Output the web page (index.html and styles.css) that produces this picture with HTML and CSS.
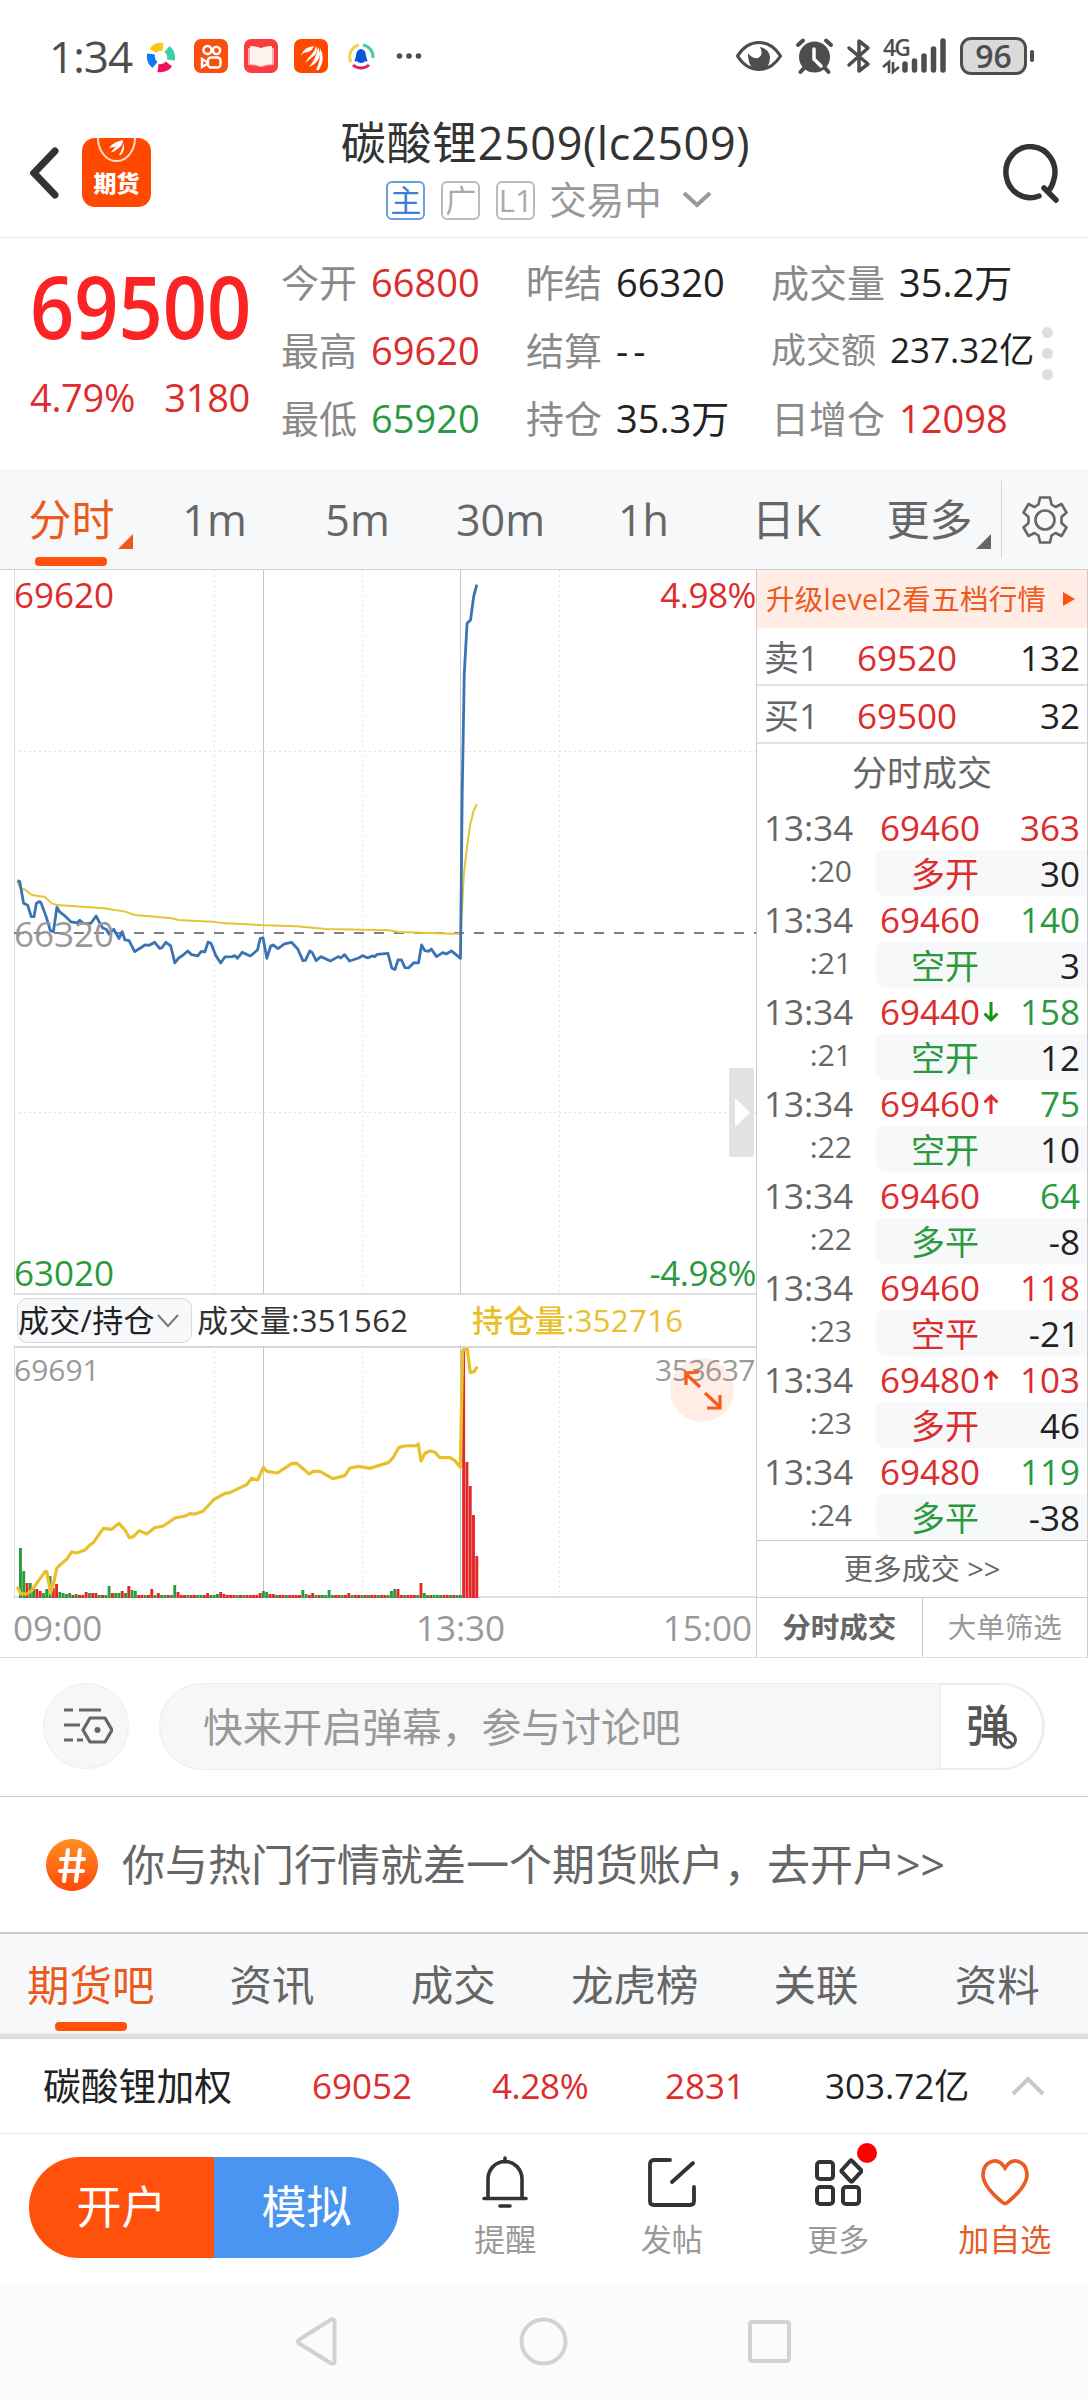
FILE: index.html
```html
<!DOCTYPE html>
<html lang="zh-CN">
  <head>
    <meta charset="UTF-8" />
    <meta name="viewport" content="width=device-width, initial-scale=1.0" />
    <title>碳酸锂2509(lc2509)</title>
    <link rel="stylesheet" href="styles.css">
  </head>
  <body>
    <div class="page">
      <!-- 状态栏 -->
      <div class="status-bar">
        <span class="clock">1:34</span>
        <svg class="status-apps" width="284" height="40" viewBox="144 36 284 40">
          <g fill="none" stroke-width="8">
            <path d="M153 51Q156 46 163 47" stroke="#f8c91c" />
            <path d="M167 49Q172 53 171 60" stroke="#3bd0a5" />
            <path d="M169 64Q165 69 158 68" stroke="#f0115c" />
            <path d="M155 65Q150 61 151 54" stroke="#0a7cf5" />
          </g>
          <rect x="194" y="39" width="34" height="34" rx="7" fill="#fb4f10" />
          <g fill="none" stroke="#fff" stroke-width="2.4">
            <circle cx="207.500" cy="50" r="4" />
            <circle cx="216.500" cy="50.500" r="3.600" />
            <rect x="208" y="57.500" width="12.500" height="10" rx="3" />
            <path d="M207 62l-5-3v8l5-3" />
          </g>
          <rect x="244" y="39" width="34" height="34" rx="7" fill="#fb3d43" />
          <path d="M248 48h26v17q-6 0-13 2q-7-2-13-2z" fill="#fbaead" />
          <path d="M250 46q6 0 11 2q5-2 11-2v18q-6 0-11 2q-5-2-11-2z" fill="#fff3f0" />
          <rect x="294" y="39" width="34" height="34" rx="7" fill="#ff4800" />
          <g fill="#fff">
            <path d="M301 55q3-8 13-9q-2 5-6 6q-4 0-7 3z" />
            <path d="M305 63q3-5 6-8q4-4 5-9q2 6-1 9q-5 4-10 8z" />
            <path d="M309 67q7-8 9-20q4 7 0 13q-3 5-9 7z" />
            <path d="M316 70q5-10 4-22q6 10-1 22z" />
          </g>
          <g fill="none" stroke-width="3">
            <path d="M351 62A12 12 0 0 1 359 45" stroke="#f3cf54" />
            <path d="M363 45A12 12 0 0 1 373 58" stroke="#49caa6" />
            <path d="M353 65A12 12 0 0 0 369 65" stroke="#d9206a" />
          </g>
          <path d="M361 49q-5 1-5 7l-1.500 5q1 1 2 0q2 2 4.500 2t4.500-2q1 1 2 0l-1.500-5q0-6-5-7z" fill="#0a55d8" />
          <g fill="#4d4d4d">
            <circle cx="399.500" cy="56" r="2.800" />
            <circle cx="409" cy="56" r="2.800" />
            <circle cx="418.500" cy="56" r="2.800" />
          </g>
        </svg>
        <svg class="status-signal" width="222" height="60" viewBox="732 26 222 60">
          <g fill="none" stroke="#4d4d4d" stroke-linecap="round" stroke-linejoin="round">
            <path d="M736.500 56Q745 42.500 758 42.500T779.500 56Q771 69.500 758 69.500T736.500 56z" stroke-width="3.200" />
            <path d="M797 45l5-4.500M830 45l-5-4.500M803 68l-3.500 4M824 68l3.500 4" stroke-width="4" />
            <path d="M848 48l19 16-9 7V41l9 7-19 17" stroke-width="3.500" />
            <path d="M904 70V64M913.500 70V61M923 70V56M932.500 70V49M942 70V41" stroke-width="5.500" />
          </g>
          <path d="M747 53q0 17 11 17t11-13q-1-8-10-10q4 8-2 11q-6 1-10-5z" fill="#4d4d4d" />
          <circle cx="813.500" cy="57" r="15.500" fill="#4d4d4d" />
          <path d="M813 49v10l7 7" fill="none" stroke="#fff" stroke-width="3.500" stroke-linecap="round" />
          <path d="M882 67l6-5v11M898 67l-6 5V62" fill="none" stroke="#4d4d4d" stroke-width="2.600" />
          <text x="882" y="56" class="net-type">4G</text>
        </svg>
        <div class="battery">96</div>
      </div>

      <!-- 标题栏 -->
      <div class="header">
        <div class="header-left">
          <svg width="30" height="52" viewBox="0 0 30 52">
            <path d="M25 4L4 26l21 22" fill="none" stroke="#333" stroke-width="7" stroke-linecap="round" />
          </svg>
          <div class="app-logo">
            <svg width="69" height="26" viewBox="0 0 69 26">
              <path d="M16 0a18.500 23 0 0 0 37 0" fill="none" stroke="#ffd9ca" stroke-width="2" />
              <path d="M27 10q4-6 14-8q0 6-7 10q-4 3-5 2q2-3 5-5q-4 0-7 1zM37 17q4-6 4-12q3 6-2 12z" fill="#fff" />
            </svg>
            <span>期货</span>
          </div>
        </div>
        <div class="header-title">
          <h1>碳酸锂2509(lc2509)</h1>
          <div class="header-sub">
            <span class="badge badge-main">主</span>
            <span class="badge">广</span>
            <span class="badge">L1</span>
            <span class="trade-state">交易中</span>
            <svg width="30" height="18" viewBox="0 0 30 18">
              <path d="M2 2l13 12L28 2" fill="none" stroke="#999" stroke-width="4" />
            </svg>
          </div>
        </div>
        <svg class="search-icon" width="58" height="60" viewBox="0 0 58 60">
          <path d="M36 52A24.500 25.500 0 1 1 51 35Q49 43 46 46M41 44L53 56" fill="none" stroke="#333" stroke-width="5.500" stroke-linecap="round" />
        </svg>
      </div>

      <!-- 行情概览 -->
      <div class="quote">
        <div class="quote-price">
          <div class="last-price">69500</div>
          <div class="change"><span>4.79%</span><span>3180</span></div>
        </div>
        <div class="quote-col col-1">
          <div class="cell"><label>今开</label><b class="red">66800</b></div>
          <div class="cell"><label>最高</label><b class="red">69620</b></div>
          <div class="cell"><label>最低</label><b class="green">65920</b></div>
        </div>
        <div class="quote-col col-2">
          <div class="cell"><label>昨结</label><b>66320</b></div>
          <div class="cell"><label>结算</label><b class="empty">--</b></div>
          <div class="cell"><label>持仓</label><b>35.3万</b></div>
        </div>
        <div class="quote-col col-3">
          <div class="cell"><label>成交量</label><b>35.2万</b></div>
          <div class="cell cell-small"><label>成交额</label><b>237.32亿</b></div>
          <div class="cell"><label>日增仓</label><b class="red">12098</b></div>
        </div>
        <div class="more-dots"><i></i><i></i><i></i></div>
      </div>

      <!-- 周期切换 -->
      <div class="period-tabs">
        <div class="period active">分时<i class="corner"></i></div>
        <div class="period">1m</div>
        <div class="period">5m</div>
        <div class="period">30m</div>
        <div class="period">1h</div>
        <div class="period">日K</div>
        <div class="period">更多<i class="corner"></i></div>
        <div class="setting">
          <svg width="46" height="50" viewBox="-23 -25 46 50">
            <path d="M-5-22.500h10l1.500 7 4 2.500 6-3 5 8.500-5 4.500v6l5 4.500-5 8.500-6-3-4 2.500-1.500 7h-10l-1.500-7-4-2.500-6 3-5-8.500 5-4.500v-6l-5-4.500 5-8.500 6 3 4-2.500z" fill="none" stroke="#666" stroke-width="2.600" stroke-linejoin="round" />
            <circle r="9.500" fill="none" stroke="#666" stroke-width="2.600" />
          </svg>
        </div>
      </div>

      <div class="main">
        <!-- 分时图 -->
        <div class="chart">
          <svg class="price-chart" width="756" height="725" viewBox="0 0 756 725">
            <g fill="none" stroke="#e3e3e3" stroke-dasharray="2 3">
              <path d="M214.500 0V724M362.500 0V724M559.500 0V724" />
              <path d="M14 181.500H756M14 542.500H756" />
            </g>
            <path d="M263.500 0V724M460.500 0V724" stroke="#c4c4c4" />
            <path d="M14.500 0V724" stroke="#ddd" />
            <path d="M14 724H756" stroke="#dedede" stroke-width="2" />
            <path d="M14 363H756" stroke="#808080" stroke-width="1.800" stroke-dasharray="10 10" />
            <g transform="translate(0 -10) scale(.347 .3333)" class="lines">
              <polyline class="line-avg" points="50,964 60,987 72,989 92,1005 130,1011 150,1031 165,1035 300,1045 360,1055 388,1065 490,1074 515,1080 610,1085 640,1089 760,1096 855,1099 940,1107 1120,1111 1150,1116 1327,1122 1331,1060 1337,940 1346,860 1355,795 1364,755 1374,732" />
              <polyline class="line-price" points="50,962 57,965 68,1030 80,1036 90,1070 98,1070 105,1030 112,1025 118,1028 133,1070 145,1112 154,1115 164,1042 172,1056 185,1066 205,1086 222,1089 230,1081 240,1090 262,1090 277,1068 288,1090 296,1104 306,1108 314,1122 328,1108 343,1136 352,1115 360,1140 372,1142 388,1175 400,1167 418,1155 430,1156 446,1147 460,1165 466,1164 478,1147 492,1158 504,1209 515,1194 527,1186 541,1173 552,1184 570,1188 580,1174 590,1176 600,1146 608,1150 622,1187 636,1209 648,1191 670,1190 677,1187 684,1195 698,1177 712,1184 722,1188 742,1170 750,1135 758,1134 769,1195 780,1158 787,1155 801,1166 820,1152 840,1147 858,1167 873,1202 880,1201 893,1173 900,1178 911,1202 925,1190 952,1203 975,1190 982,1194 993,1184 1007,1203 1034,1194 1045,1187 1060,1194 1072,1188 1080,1190 1087,1183 1118,1180 1129,1224 1138,1229 1147,1200 1157,1200 1167,1223 1177,1224 1193,1208 1206,1209 1215,1155 1224,1172 1236,1174 1243,1167 1258,1190 1276,1178 1286,1182 1301,1173 1327,1195 1332,700 1338,340 1346,190 1356,180 1365,110 1374,74" />
            </g>
            <text x="14" y="38" class="axis red">69620</text>
            <text x="756" y="38" class="axis end red">4.98%</text>
            <text x="14" y="377" class="axis">66320</text>
            <text x="14" y="716" class="axis green">63020</text>
            <text x="756" y="716" class="axis end green">-4.98%</text>
            <rect x="729" y="498" width="25" height="89" rx="2" fill="#e2e2e2" />
            <path d="M735 528l15 14.500-15 14.500z" fill="#fff" />
          </svg>

          <div class="indicator-bar">
            <div class="indicator-select">
              成交/持仓
              <svg width="22" height="14" viewBox="0 0 22 14"><path d="M1 1l10 11L21 1" fill="none" stroke="#777" stroke-width="2" /></svg>
            </div>
            <span class="volume-text">成交量:351562</span>
            <span class="position-text">持仓量:352716</span>
          </div>

          <svg class="volume-chart" width="756" height="252" viewBox="0 0 756 252">
            <path d="M14 1H756" stroke="#d8d8d8" stroke-width="2" />
            <path d="M214.500 0V250M362.500 0V250M559.500 0V250" stroke="#e3e3e3" stroke-dasharray="2 3" />
            <path d="M263.500 0V250M460.500 0V250" stroke="#c4c4c4" />
            <path d="M14.500 0V250" stroke="#ddd" />
            <path d="M14 251H756" stroke="#dedede" stroke-width="2" />
            <g id="volume-bars"></g>
            <g transform="translate(0 -76) scale(.3333)" class="lines">
              <polyline class="line-position" points="52,950 62,972 80,972 95,962 135,905 140,905 152,970 163,930 170,895 180,885 200,868 215,846 230,849 255,840 268,826 280,818 310,775 335,778 357,760 375,780 388,803 400,800 418,782 440,792 465,773 490,768 525,744 555,738 570,731 585,732 610,723 640,690 675,670 690,668 740,644 755,625 773,630 790,592 800,604 832,609 875,581 890,580 928,612 940,604 960,604 998,626 1035,617 1050,594 1075,589 1110,595 1165,578 1180,562 1197,532 1215,528 1250,527 1255,522 1263,573 1275,550 1290,543 1305,547 1318,562 1350,563 1365,572 1381,592 1388,245 1391,238 1402,238 1411,308 1422,305 1432,290" />
            </g>
            <circle cx="702" cy="44" r="32" fill="#ffede6" />
            <text x="14" y="35" class="axis small">69691</text>
            <text x="755" y="35" class="axis small end">353637</text>
            <path d="M700 41l-15-14M686 39V27l13-1M705 47l15 14M707 62h13V49" fill="none" stroke="#fa5a1a" stroke-width="3.200" />
          </svg>

          <div class="time-axis">
            <span>09:00</span>
            <span class="time-mid">13:30</span>
            <span>15:00</span>
          </div>
        </div>

        <!-- 盘口与成交明细 -->
        <div class="panel">
          <div class="level2">升级level2看五档行情<i></i></div>
          <div class="order"><span>卖1</span><b>69520</b><em>132</em></div>
          <div class="order"><span>买1</span><b>69500</b><em>32</em></div>
          <div class="deal-title">分时成交</div>

          <div class="deal">
            <div class="deal-time">13:34<small>:20</small></div>
            <div class="deal-info">
              <div class="deal-row"><b>69460</b><em class="red">363</em></div>
              <div class="deal-row deal-type"><span class="red">多开</span><em>30</em></div>
            </div>
          </div>
          <div class="deal">
            <div class="deal-time">13:34<small>:21</small></div>
            <div class="deal-info">
              <div class="deal-row"><b>69460</b><em class="green">140</em></div>
              <div class="deal-row deal-type"><span class="green">空开</span><em>3</em></div>
            </div>
          </div>
          <div class="deal">
            <div class="deal-time">13:34<small>:21</small></div>
            <div class="deal-info">
              <div class="deal-row"><b>69440</b><svg class="arrow" viewBox="0 0 16 22"><path d="M8 1v18M1.500 12.500L8 19l6.500-6.500" stroke="#109618" /></svg><em class="green">158</em></div>
              <div class="deal-row deal-type"><span class="green">空开</span><em>12</em></div>
            </div>
          </div>
          <div class="deal">
            <div class="deal-time">13:34<small>:22</small></div>
            <div class="deal-info">
              <div class="deal-row"><b>69460</b><svg class="arrow" viewBox="0 0 16 22"><path d="M8 21V3M1.500 9.500L8 3l6.500 6.500" stroke="#e02b2b" /></svg><em class="green">75</em></div>
              <div class="deal-row deal-type"><span class="green">空开</span><em>10</em></div>
            </div>
          </div>
          <div class="deal">
            <div class="deal-time">13:34<small>:22</small></div>
            <div class="deal-info">
              <div class="deal-row"><b>69460</b><em class="green">64</em></div>
              <div class="deal-row deal-type"><span class="green">多平</span><em>-8</em></div>
            </div>
          </div>
          <div class="deal">
            <div class="deal-time">13:34<small>:23</small></div>
            <div class="deal-info">
              <div class="deal-row"><b>69460</b><em class="red">118</em></div>
              <div class="deal-row deal-type"><span class="red">空平</span><em>-21</em></div>
            </div>
          </div>
          <div class="deal">
            <div class="deal-time">13:34<small>:23</small></div>
            <div class="deal-info">
              <div class="deal-row"><b>69480</b><svg class="arrow" viewBox="0 0 16 22"><path d="M8 21V3M1.500 9.500L8 3l6.500 6.500" stroke="#e02b2b" /></svg><em class="red">103</em></div>
              <div class="deal-row deal-type"><span class="red">多开</span><em>46</em></div>
            </div>
          </div>
          <div class="deal">
            <div class="deal-time">13:34<small>:24</small></div>
            <div class="deal-info">
              <div class="deal-row"><b>69480</b><em class="green">119</em></div>
              <div class="deal-row deal-type"><span class="green">多平</span><em>-38</em></div>
            </div>
          </div>

          <div class="deal-more">更多成交 &gt;&gt;</div>
          <div class="panel-tabs">
            <span class="active">分时成交</span>
            <span>大单筛选</span>
          </div>
        </div>
      </div>

      <!-- 弹幕 -->
      <div class="barrage">
        <div class="barrage-setting">
          <svg width="50" height="38" viewBox="0 0 50 38">
            <g fill="none" stroke="#666" stroke-width="3.200" stroke-linejoin="round">
              <path d="M1 3h9M16 3h22M1 18h16M1 33h9M14 33h6" />
              <path d="M27 11h15l7 12-7 12H27l-7-12z" />
            </g>
            <circle cx="34.500" cy="23" r="3" fill="#666" />
          </svg>
        </div>
        <div class="barrage-input">
          <span>快来开启弹幕，参与讨论吧</span>
          <div class="barrage-switch">
            弹
            <svg class="ban" width="20" height="20" viewBox="0 0 20 20">
              <circle cx="10" cy="10" r="7.500" fill="#fff" stroke="#555" stroke-width="3" />
              <path d="M5 5l10 10" stroke="#555" stroke-width="3" />
            </svg>
          </div>
        </div>
      </div>

      <!-- 开户推广 -->
      <div class="promo">
        <svg width="52" height="52" viewBox="0 0 52 52">
          <defs>
            <linearGradient id="hot" x1="0" y1="0" x2="0" y2="1">
              <stop offset="0" stop-color="#ff8f1f" />
              <stop offset="1" stop-color="#ff4a0d" />
            </linearGradient>
          </defs>
          <circle cx="26" cy="26" r="26" fill="url(#hot)" />
          <path d="M22 11l-4 31M34 11l-4 31M15 20h23M14 32h23" stroke="#fff" stroke-width="4.200" stroke-linecap="round" />
        </svg>
        <span>你与热门行情就差一个期货账户，去开户&gt;&gt;</span>
      </div>

      <div class="section-tabs">
        <div class="section active">期货吧</div>
        <div class="section">资讯</div>
        <div class="section">成交</div>
        <div class="section">龙虎榜</div>
        <div class="section">关联</div>
        <div class="section">资料</div>
      </div>

      <!-- 加权指数 -->
      <div class="index-bar">
        <span class="index-name">碳酸锂加权</span>
        <span class="index-price red">69052</span>
        <span class="index-rate red">4.28%</span>
        <span class="index-diff red">2831</span>
        <span class="index-amount">303.72亿</span>
        <svg width="34" height="22" viewBox="0 0 34 22"><path d="M2 19L17 4l15 15" fill="none" stroke="#c8c8c8" stroke-width="4" /></svg>
      </div>

      <!-- 底部操作 -->
      <div class="action-bar">
        <div class="trade-buttons">
          <div class="btn-open">开户</div>
          <div class="btn-demo">模拟</div>
        </div>
        <div class="action">
          <svg width="50" height="54" viewBox="0 0 50 54">
            <g fill="none" stroke="#333" stroke-width="3.600" stroke-linecap="round">
              <path d="M25 3v4M8 43V24a17 17.500 0 0 1 34 0V43M4 43.500H46M20 51h10" />
            </g>
          </svg>
          <span>提醒</span>
        </div>
        <div class="action">
          <svg width="50" height="54" viewBox="0 0 50 54">
            <path d="M23 5H7Q3 5 3 9V46Q3 50 7 50H43Q47 50 47 46V32M25 27L46 8" fill="none" stroke="#333" stroke-width="3.800" stroke-linecap="round" />
          </svg>
          <span>发帖</span>
        </div>
        <div class="action">
          <svg width="50" height="54" viewBox="0 0 50 54">
            <g fill="none" stroke="#333" stroke-width="4">
              <rect x="4" y="7" width="16" height="17" rx="3" />
              <rect x="4" y="32" width="16" height="17" rx="3" />
              <rect x="30" y="32" width="16" height="17" rx="3" />
              <path d="M38.500 5.500L48 15q1 1 0 2l-8.500 9q-1 1-2 0L29 17q-1-1 0-2l8.500-9.500q.5-.5 1 0z" />
            </g>
          </svg>
          <span>更多</span>
          <i class="red-dot"></i>
        </div>
        <div class="action action-fav">
          <svg width="50" height="54" viewBox="0 0 50 54">
            <path d="M25 13Q20 5 13.500 6Q3 8 3 21Q4 32 22 47Q25 50 28 47Q46 32 47 21Q47 8 36.500 6Q30 5 25 13z" fill="none" stroke="#ea5d22" stroke-width="3.600" />
          </svg>
          <span>加自选</span>
        </div>
      </div>

      <!-- 系统导航 -->
      <div class="system-nav">
        <svg width="496" height="50" viewBox="295 2316 496 50">
          <g fill="none" stroke="#d2d2d2" stroke-width="4" stroke-linejoin="round">
            <path d="M298.500 2340q-1 1.500 0 3l32 20q4 2 4-2v-39q0-4-4-2z" />
            <circle cx="543.500" cy="2341.500" r="22" />
            <rect x="750" y="2322" width="39" height="39" rx="2" />
          </g>
        </svg>
      </div>
    </div>
    <script src="script.js"></script>
  </body>
</html>
```
FILE: styles.css
```css
:root {
  --red: #dc2c2c;
  --green: #2a9a3e;
  --orange: #ff500c;
  --blue: #4b95f2;
  --yellow: #e9c02c;
  --text: #222;
  --gray: #666;
  --light-gray: #999;
  --bar-bg: #f7f8fa;
}

* {
  margin: 0;
  padding: 0;
  box-sizing: border-box;
}

body {
  font-family: "Open Sans", "Noto Sans CJK SC", sans-serif;
  color: var(--text);
  background: #fff;
}

b,
em,
i {
  font-weight: 400;
  font-style: normal;
}

svg {
  display: block;
  flex-shrink: 0;
}

.red {
  color: var(--red);
  fill: var(--red);
}

.green {
  color: var(--green);
  fill: var(--green);
}

.page {
  width: 1088px;
  height: 2400px;
  overflow: hidden;
  white-space: nowrap;
}

/* 状态栏 */
.status-bar {
  height: 112px;
  padding: 0 54px 0 49px;
  display: flex;
  align-items: center;
  color: #4d4d4d;
}

.clock {
  width: 95px;
  font-size: 44px;
  font-weight: 500;
  letter-spacing: -1px;
}

.status-signal {
  margin-left: auto;
}

.net-type {
  font-size: 23px;
  font-weight: 600;
  letter-spacing: -2px;
  fill: #4d4d4d;
}

.battery {
  position: relative;
  width: 67px;
  height: 38px;
  margin: 0 7px 0 5px;
  border: 3px solid #4d4d4d;
  border-radius: 11px;
  background: #dadada;
  font-size: 32px;
  font-weight: 600;
  line-height: 32px;
  text-align: center;
}

.battery::after {
  content: "";
  position: absolute;
  top: 10px;
  right: -10px;
  width: 4px;
  height: 12px;
  border-radius: 2px;
  background: #4d4d4d;
}

/* 标题栏 */
.header {
  height: 126px;
  padding: 0 27px 0 30px;
  display: flex;
  justify-content: space-between;
  border-bottom: 1px solid #e8e8e8;
}

.header-left {
  width: 300px;
  height: 121px;
  display: flex;
  align-items: center;
  gap: 22px;
}

.app-logo {
  width: 69px;
  height: 69px;
  border-radius: 13px;
  background: #ff4800;
  color: #fff;
  font-size: 23px;
  font-weight: 900;
  line-height: 38px;
  text-align: center;
}

.header-title {
  display: flex;
  flex-direction: column;
  align-items: center;
}

.header-title h1 {
  height: 64px;
  font-size: 45px;
  font-weight: 400;
  line-height: 62px;
  letter-spacing: 0.6px;
  color: #333;
}

.header-sub {
  display: flex;
  align-items: center;
  padding-left: 7px;
  color: var(--light-gray);
  height: 48px;
}

.badge {
  width: 39px;
  height: 39px;
  margin-right: 16px;
  border: 2px solid #bbb;
  border-radius: 6px;
  font-size: 31px;
  line-height: 34px;
  text-align: center;
  color: #aaa;
}

.badge-main {
  border-color: #6b9fe0;
  color: #3f7fd6;
}

.trade-state {
  margin: 0 20px 0 -2px;
  font-size: 37.500px;
  line-height: 46px;
}

.search-icon {
  margin: 32px 0 0 242px;
}

/* 行情概览 */
.quote {
  height: 231px;
  display: flex;
}

.quote-price {
  width: 281px;
  padding: 24px 0 0 30px;
  color: var(--red);
}

.last-price {
  height: 86px;
  font-size: 87px;
  font-weight: 600;
  line-height: 86px;
  color: #fb2323;
  transform: scaleX(0.89);
  transform-origin: 0 0;
}

.change {
  width: 220px;
  margin-top: 24px;
  display: flex;
  justify-content: space-between;
  font-size: 38px;
  line-height: 50px;
  letter-spacing: -0.3px;
}

.quote-col {
  padding-top: 10px;
}

.col-1 {
  width: 245px;
}

.col-2 {
  width: 245px;
}

.col-3 {
  width: 271px;
}

.cell {
  height: 68px;
  display: flex;
  gap: 14px;
  font-size: 38px;
  line-height: 68px;
}

.cell label {
  color: #8a8a8a;
}

.cell .empty {
  letter-spacing: 5px;
}

.cell-small {
  font-size: 35px;
}

.more-dots {
  padding-top: 89px;
  display: flex;
  flex-direction: column;
  gap: 10px;
}

.more-dots i {
  width: 11px;
  height: 11px;
  border-radius: 50%;
  background: #dedede;
}

/* 周期切换 */
.period-tabs {
  height: 101px;
  display: flex;
  background: var(--bar-bg);
  border-bottom: 1px solid #ccd0d4;
}

.period {
  position: relative;
  width: 143px;
  font-size: 43px;
  line-height: 101px;
  text-align: center;
  color: var(--gray);
}

.active {
  color: #ea5a1c;
}

.period.active::after {
  content: "";
  position: absolute;
  left: 35px;
  bottom: 3px;
  width: 72px;
  height: 9px;
  border-radius: 4px;
  background: var(--orange);
}

.corner {
  position: absolute;
  right: 10px;
  top: 65px;
  border-left: 15px solid transparent;
  border-bottom: 15px solid currentColor;
}

.setting {
  width: 87px;
  height: 77px;
  margin-top: 12px;
  display: flex;
  align-items: center;
  justify-content: center;
  border-left: 1px solid #d3d6da;
}

/* 图表 */
.main {
  height: 1088px;
  display: flex;
  border-bottom: 1px solid #ddd;
}

.chart {
  width: 756px;
}

.axis {
  font-size: 35px;
  fill: var(--light-gray);
}

.axis.red {
  fill: var(--red);
}

.axis.green {
  fill: var(--green);
}

.axis.small {
  font-size: 30px;
}

.axis.end {
  text-anchor: end;
  letter-spacing: -0.5px;
}

.lines polyline {
  fill: none;
  stroke-linejoin: round;
  vector-effect: non-scaling-stroke;
}

.line-avg {
  stroke: #e6c438;
  stroke-width: 2;
}

.line-price {
  stroke: #3a73b4;
  stroke-width: 2.800;
}

.line-position {
  stroke: var(--yellow);
  stroke-width: 3.200;
}

.indicator-bar {
  height: 51px;
  padding-left: 17px;
  display: flex;
  align-items: center;
  font-size: 31px;
  line-height: 43px;
}

.indicator-select {
  width: 175px;
  height: 45px;
  display: flex;
  align-items: center;
  gap: 2px;
  border: 1px solid #d6dade;
  border-radius: 10px;
  background: var(--bar-bg);
  letter-spacing: 0.3px;
}

.volume-text {
  width: 275px;
  margin-left: 5px;
  color: #333;
  letter-spacing: 0.4px;
}

.position-text {
  color: var(--yellow);
  font-weight: 500;
  letter-spacing: 0.4px;
}

.time-axis {
  height: 59px;
  padding: 0 4px 0 13px;
  display: flex;
  justify-content: space-between;
  font-size: 35px;
  line-height: 59px;
  color: var(--light-gray);
}

.time-mid {
  margin-left: 156px;
}

/* 成交明细 */
.panel {
  width: 332px;
  border: solid #ccc;
  border-width: 0 1px;
  font-size: 35px;
}

.level2 {
  height: 58px;
  padding-left: 9px;
  display: flex;
  align-items: center;
  gap: 17px;
  background: #feece5;
  color: #ee5a1e;
  font-size: 28.500px;
  line-height: 56px;
  letter-spacing: 0.3px;
}

.level2 i {
  border: solid transparent;
  border-width: 7px 0 7px 12px;
  border-left-color: var(--orange);
}

.order {
  height: 58px;
  padding: 2px 7px 0 7px;
  display: flex;
  line-height: 56px;
  border-bottom: 2px solid #e2e2e2;
}

.order span {
  width: 93px;
  color: var(--gray);
}

.order b {
  color: var(--red);
}

.order em,
.deal-row em {
  margin-left: auto;
}

.deal-title {
  height: 60px;
  line-height: 57px;
  text-align: center;
  color: var(--gray);
}

.deal {
  height: 92px;
  display: flex;
}

.deal-time {
  width: 119px;
  padding: 1px 24px 0 7px;
  line-height: 46px;
  text-align: right;
  color: var(--gray);
}

.deal-time small {
  display: block;
  font-size: 30px;
  line-height: 39px;
}

.deal-info {
  flex: 1;
}

.deal-row {
  height: 46px;
  padding: 1px 7px 0 4px;
  display: flex;
  align-items: center;
  line-height: 48px;
}

.deal-row b {
  color: var(--red);
}

.deal-type {
  padding-left: 35px;
  border-radius: 8px 0 0 8px;
  background: var(--bar-bg);
}

.deal-type span {
  font-size: 34px;
}

.arrow {
  width: 16px;
  height: 22px;
  margin-left: 3px;
  fill: none;
  stroke-width: 3;
}

.deal-more {
  height: 58px;
  border: solid #ccc;
  border-width: 1px 0;
  font-size: 29px;
  line-height: 55px;
  text-align: center;
  color: var(--gray);
}

.panel-tabs {
  height: 59px;
  display: flex;
  font-size: 28.500px;
  line-height: 58px;
  text-align: center;
}

.panel-tabs span {
  flex: 1;
  color: var(--light-gray);
}

.panel-tabs .active {
  border-right: 1px solid #ccc;
  font-weight: 700;
  color: var(--gray);
}

/* 弹幕 */
.barrage {
  height: 139px;
  padding: 25px 43px 0;
  display: flex;
  gap: 30px;
  border-bottom: 1px solid #ccc;
}

.barrage-setting {
  width: 86px;
  height: 86px;
  padding-left: 3px;
  display: flex;
  align-items: center;
  justify-content: center;
  border: 1px solid #eee;
  border-radius: 50%;
  background: #f7f7f7;
}

.barrage-input {
  width: 886px;
  height: 87px;
  padding-left: 43px;
  display: flex;
  justify-content: space-between;
  border: 1px solid #ececec;
  border-radius: 44px;
  background: #f7f7f7;
  font-size: 39.800px;
  line-height: 85px;
  color: var(--light-gray);
  overflow: hidden;
}

.barrage-switch {
  position: relative;
  width: 104px;
  padding-left: 25px;
  border: 2px solid #ececec;
  border-width: 1px 2px 1px 1px;
  border-radius: 0 44px 44px 0;
  background: #fff;
  font-size: 44px;
  font-weight: 500;
  line-height: 80px;
  color: #555;
}

.ban {
  position: absolute;
  left: 57px;
  top: 45px;
}

/* 推广 */
.promo {
  height: 135px;
  padding-left: 46px;
  display: flex;
  align-items: center;
  gap: 24px;
  font-size: 43px;
  line-height: 131px;
  color: var(--gray);
}

.section-tabs {
  height: 107px;
  display: flex;
  background: linear-gradient(#e8e8e8, #d8d8d8) bottom / 100% 6px no-repeat, var(--bar-bg);
  border-top: 2px solid #ccc;
}

.section {
  position: relative;
  flex: 1;
  font-size: 42.500px;
  line-height: 101px;
  text-align: center;
  color: var(--gray);
}

.section.active {
  color: #ea5a1c;
}

.section.active::after {
  content: "";
  position: absolute;
  left: 55px;
  top: 88px;
  width: 72px;
  height: 9px;
  border-radius: 4px;
  background: var(--orange);
}

/* 加权指数 */
.index-bar {
  height: 95px;
  padding-left: 43px;
  display: flex;
  align-items: center;
  border-bottom: 1px solid #e8e8e8;
  font-size: 35px;
  line-height: 94px;
}

.index-name {
  width: 269px;
  font-size: 37.800px;
}

.index-price {
  width: 180px;
}

.index-rate {
  width: 173px;
  letter-spacing: -0.4px;
}

.index-diff {
  width: 160px;
}

.index-amount {
  width: 186px;
}

/* 底部操作 */
.action-bar {
  height: 149px;
  padding: 23px 0 0 29px;
  display: flex;
}

.trade-buttons {
  width: 370px;
  height: 101px;
  margin-right: 23px;
  display: flex;
  border-radius: 51px;
  overflow: hidden;
  color: #fff;
  font-size: 45px;
  line-height: 99px;
  text-align: center;
}

.btn-open {
  flex: 1;
  background: var(--orange);
}

.btn-demo {
  flex: 1;
  background: var(--blue);
}

.action {
  position: relative;
  width: 166.500px;
  display: flex;
  flex-direction: column;
  align-items: center;
  font-size: 31px;
  line-height: 44px;
  color: var(--light-gray);
}

.action svg {
  margin-top: -2px;
}

.action span {
  margin-top: 8px;
}

.action-fav {
  color: #e45d25;
}

.red-dot {
  position: absolute;
  left: 102px;
  top: -14px;
  width: 20px;
  height: 20px;
  border-radius: 50%;
  background: #f00;
}

/* 系统导航 */
.system-nav {
  height: 118px;
  padding: 33px 0 0 295px;
  background: #fbfbfb;
}
```
FILE: script.js
```js
// 每分钟成交量柱：颜色序列与高度，未列出的分钟取最小高度
const colors =
  "ggrggrrgggrrggggrgrrrgrrgrggrggrgrggrrgrrgrggrggrrrgrrggrrgggrrrrrgrgrrrrrggrrgrrgrrrrggrrgrggggrrgrrgrrgrgrrgrrgggrrgrrrgrggrgggrrgrgg".padEnd(135, "g").slice(0, 135) + "rrrrr";
const heights = {
  0: 50, 1: 27, 2: 15, 3: 15, 4: 9, 5: 9, 6: 7, 7: 5, 8: 9, 9: 22, 10: 10, 11: 14,
  12: 6, 13: 5, 14: 4, 15: 5, 17: 4, 20: 6, 21: 5, 22: 5, 23: 5, 27: 12, 28: 5, 29: 5,
  30: 5, 31: 7, 32: 5, 33: 12, 34: 8, 35: 7, 40: 9, 42: 5, 47: 13, 48: 6, 57: 5, 60: 4,
  61: 6, 62: 4, 73: 5, 74: 7, 75: 6, 76: 4, 77: 4, 86: 8, 87: 4, 89: 5, 94: 8, 100: 5,
  113: 7, 114: 9, 115: 9, 122: 15, 123: 5, 135: 248, 136: 136, 137: 112, 138: 83, 139: 42
};

const base = 252;
let bars = "";
for (let i = 0; i < 140; i++) {
  const h = heights[i] || 3;
  const x = (19 + i * 3.283).toFixed(2);
  bars += `<rect x="${x}" y="${base - h}" width="2.900" height="${h}" fill="${colors[i] === "r" ? "#e32626" : "#2a9a3e"}"/>`;
}
document.getElementById("volume-bars").innerHTML = bars;
```
